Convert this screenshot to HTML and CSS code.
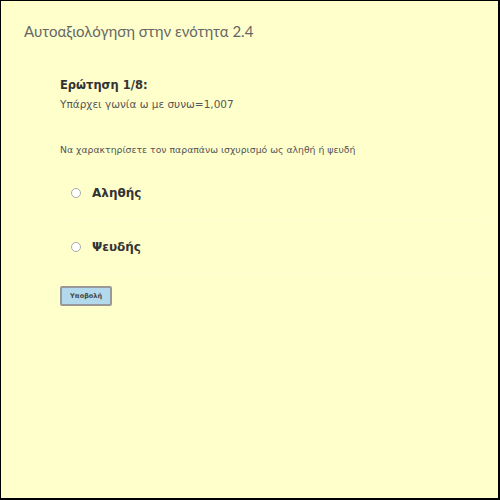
FILE: index.html
```html
<!DOCTYPE html>
<html lang="el">
<head>
<meta charset="utf-8">
<link rel="stylesheet" href="styles.css">
</head>
<body>
<div class="frame">
  <h1 class="title">Αυτοαξιολόγηση στην ενότητα 2.4</h1>
  <div class="quiz">
    <div class="qnum">Ερώτηση 1/8:</div>
    <div class="qtext">Υπάρχει γωνία ω με συνω=1,007</div>
    <div class="instr">Να χαρακτηρίσετε τον παραπάνω ισχυρισμό ως αληθή ή ψευδή</div>
    <div class="opt"><span class="radio"></span><span class="label">Αληθής</span></div>
    <div class="opt"><span class="radio"></span><span class="label">Ψευδής</span></div>
    <button class="submit">Υποβολή</button>
  </div>
</div>
</body>
</html>
```
FILE: styles.css
```css
html, body { margin: 0; padding: 0; }
body { width: 500px; height: 500px; }
.frame {
  box-sizing: border-box;
  width: 500px;
  height: 500px;
  background: #ffffcc;
  border-top: 1px solid #000;
  border-left: 1px solid #000;
  border-right: 2px solid #000;
  border-bottom: 2px solid #000;
  font-family: "DejaVu Sans", Verdana, sans-serif;
}
.title {
  margin: 0;
  padding: 21px 0 0 23px;
  font-family: "Lato", "DejaVu Sans", sans-serif;
  font-weight: normal;
  font-size: 15px;
  line-height: 19px;
  color: #666;
}
.quiz {
  padding: 37px 0 0 59px;
  display: flex;
  flex-direction: column;
  align-items: flex-start;
}
.qnum {
  font-weight: bold;
  font-size: 11.5px;
  line-height: 14px;
  color: #333;
}
.qtext {
  margin-top: 5px;
  font-size: 10.5px;
  line-height: 14px;
  color: #555;
}
.instr {
  margin-top: 33px;
  margin-bottom: 10px;
  font-size: 9.3px;
  line-height: 12px;
  color: #555;
}
.opt {
  display: flex;
  align-items: center;
  gap: 11px;
  width: 420px;
  margin-left: 5px;
  padding: 20px 0 20px 6px;
  border-bottom: 1px solid #fbfbd8;
  box-sizing: border-box;
  height: 54px;
}
.radio {
  width: 8px;
  height: 8px;
  border-radius: 50%;
  border: 1px solid #aaa;
  background: #fff;
}
.label {
  font-weight: bold;
  font-size: 12px;
  color: #333;
}
.submit {
  margin-top: 12px;
  width: 52px;
  height: 20px;
  padding: 0;
  background: #b3d9ec;
  border: 2px solid #999;
  border-radius: 2px;
  font-family: "DejaVu Sans", sans-serif;
  font-size: 6.5px;
  font-weight: bold;
  color: #444;
}
```
